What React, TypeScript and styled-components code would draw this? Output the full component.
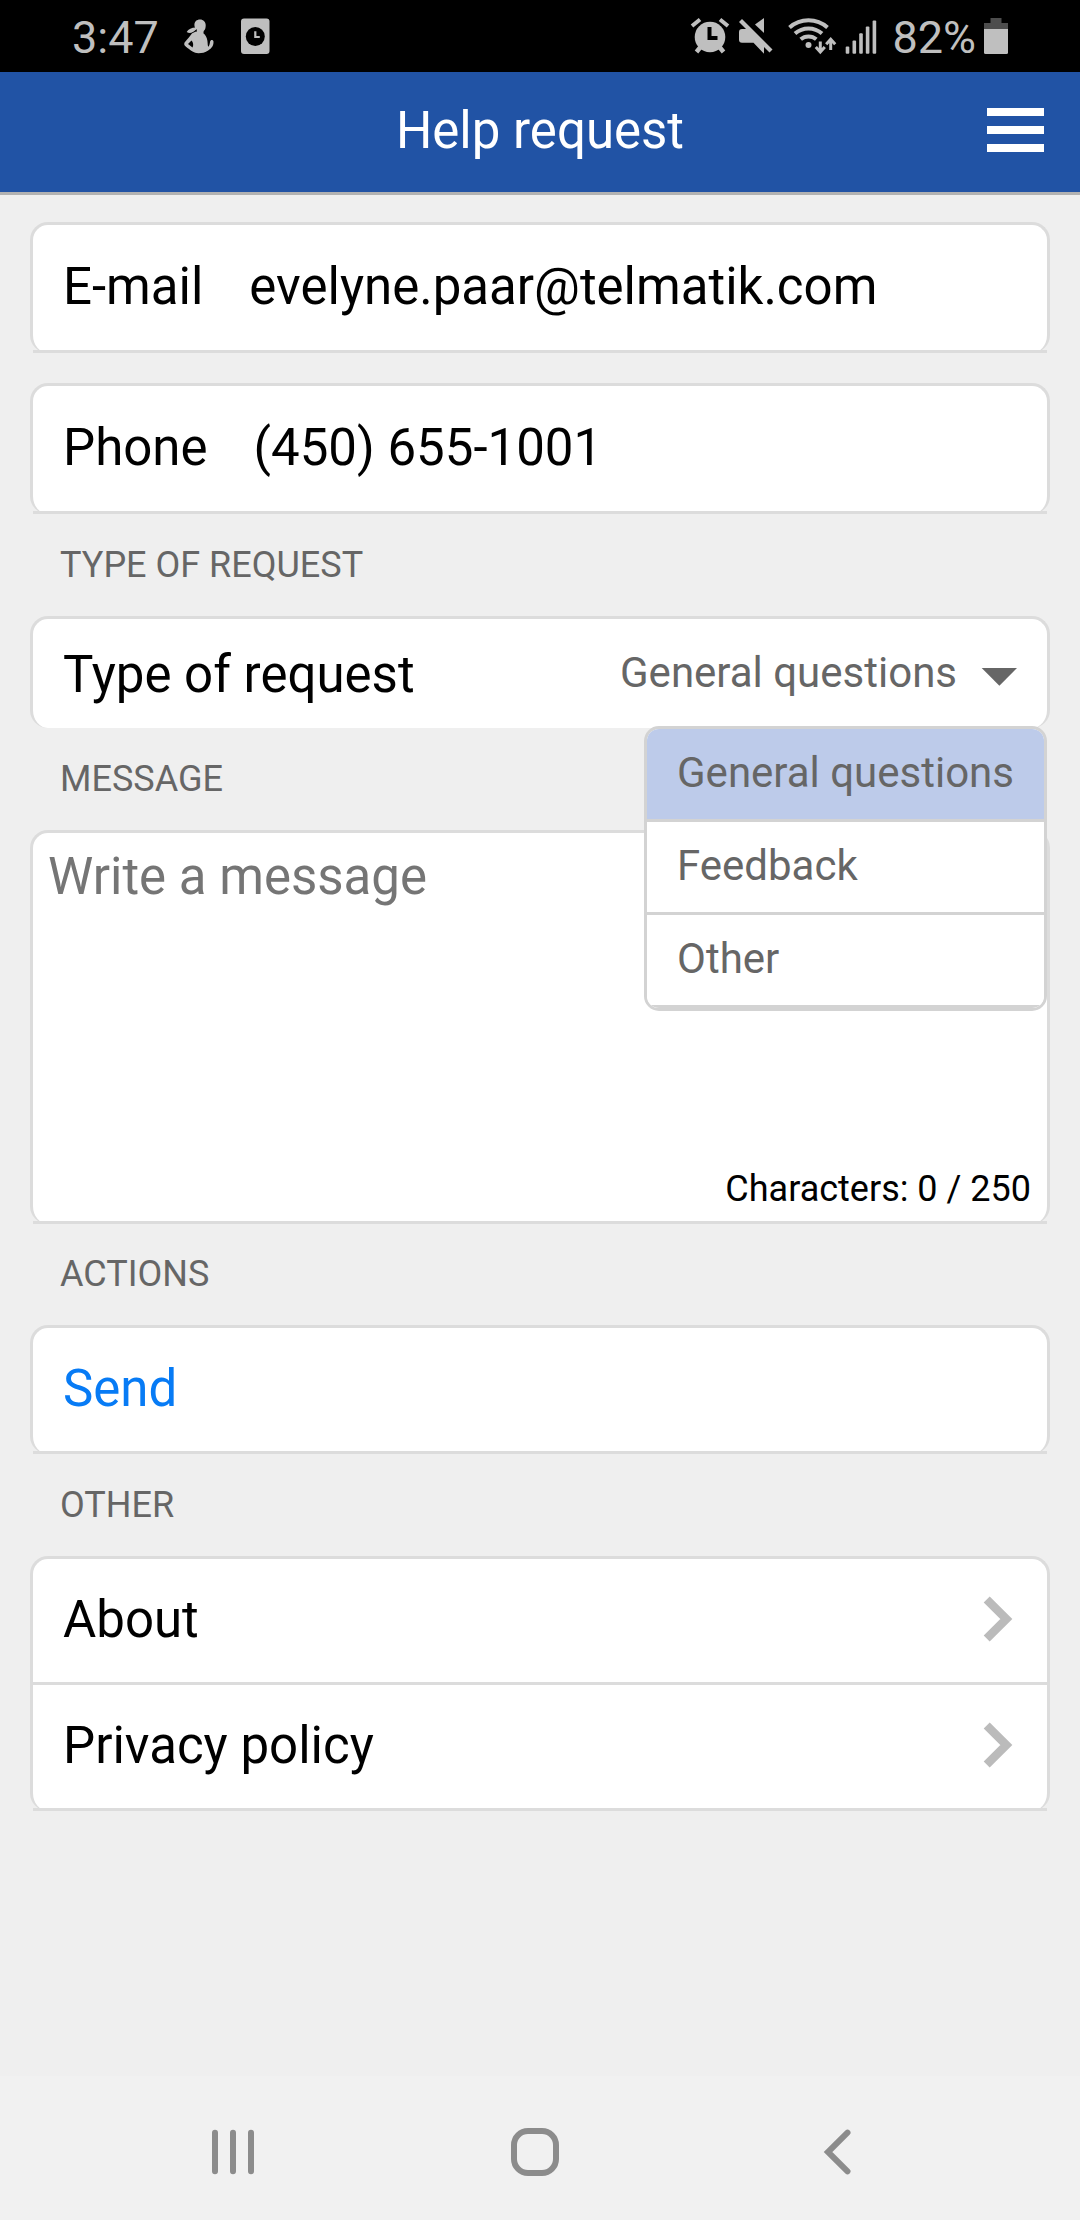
import React from "react";
import styled, { createGlobalStyle } from "styled-components";

const GlobalStyle = createGlobalStyle`
  *, *::before, *::after { box-sizing: border-box; }
  body { margin: 0; background: #efefef; }
`;

const Screen = styled.div`
  display: flex;
  flex-direction: column;
  width: 1080px;
  height: 2220px;
  background: #efefef;
  color: #000;
  font-family: Roboto, "Liberation Sans", sans-serif;
  overflow: hidden;
`;

const StatusBar = styled.div`
  display: flex;
  align-items: flex-start;
  justify-content: space-between;
  flex: none;
  height: 72px;
  padding: 0 72px 0 72px;
  background: #000;
  color: #bfbfbf;
`;

const StatusGroup = styled.div`
  display: flex;
  align-items: flex-start;
`;

const StatusText = styled.span<{ $gap: number }>`
  margin-right: ${(p) => p.$gap}px;
  font-size: 45px;
  line-height: 75px;
  white-space: nowrap;
`;

const StatusIcon = styled.svg<{ $gap?: number }>`
  display: block;
  flex: none;
  height: 72px;
  margin-right: ${(p) => p.$gap ?? 0}px;
`;

const Header = styled.header`
  display: grid;
  grid-template-columns: 120px 1fr 120px;
  align-items: center;
  flex: none;
  height: 123px;
  background: #2153a5;
  border-bottom: 3px solid #b2b2b2;
`;

const Title = styled.h1`
  grid-column: 2;
  margin: 0;
  color: #fff;
  font-size: 51px;
  font-weight: 400;
  line-height: 118px;
  height: 120px;
  text-align: center;
`;

const MenuButton = styled.button`
  display: flex;
  flex-direction: column;
  justify-content: center;
  gap: 10px;
  width: 84px;
  height: 120px;
  margin-left: 27px;
  padding: 0 0 4px;
  border: 0;
  background: none;
`;

const MenuBar = styled.span`
  display: block;
  width: 57px;
  height: 8px;
  background: #fff;
`;

const Content = styled.main`
  display: flex;
  flex-direction: column;
  flex: 1;
  min-height: 0;
  padding: 27px 30px 0;
`;

const Card = styled.section<{ $gapTop?: number }>`
  position: relative;
  flex: none;
  margin-top: ${(p) => p.$gapTop ?? 0}px;
  background: #fff;
  border: 3px solid #dcdcdc;
  border-bottom: 0;
  border-radius: 18px;
`;

const Row = styled.div<{ $height: number; $plain?: boolean }>`
  display: flex;
  align-items: flex-start;
  height: ${(p) => p.$height}px;
  padding: 0 29px 0 30px;
  border-bottom: ${(p) => (p.$plain ? "0" : "3px solid #dcdcdc")};
`;

const RowText = styled.span<{ $line: number; $color?: string }>`
  color: ${(p) => p.$color ?? "#000"};
  font-size: 51px;
  line-height: ${(p) => p.$line}px;
  white-space: nowrap;
`;

const RowValue = styled(RowText)`
  margin-left: 46px;
`;

const Spacer = styled.span`
  flex: 1;
`;

const RowIcon = styled.svg`
  display: block;
  flex: none;
`;

const SectionLabel = styled.h2<{ $height?: number }>`
  flex: none;
  height: ${(p) => p.$height ?? 102}px;
  margin: 0;
  padding-left: 30px;
  color: #666;
  font-size: 36px;
  font-weight: 400;
  line-height: ${(p) => (p.$height ?? 102) + (p.$height ? 0 : 1)}px;
`;

const SelectValue = styled.span`
  margin-right: 24px;
  color: #666;
  font-size: 42px;
  line-height: 107px;
  white-space: nowrap;
`;

const Menu = styled.ul`
  position: absolute;
  z-index: 2;
  top: 107px;
  right: 0;
  width: 403px;
  margin: 0;
  padding: 0;
  overflow: hidden;
  list-style: none;
  background: #fff;
  border: 3px solid #d3d3d3;
  border-radius: 15px;
`;

const MenuItem = styled.li<{ $selected?: boolean }>`
  height: 93px;
  padding-left: 30px;
  background: ${(p) => (p.$selected ? "#bdcbea" : "#fff")};
  border-bottom: 3px solid #d3d3d3;
  color: #666;
  font-size: 42px;
  line-height: 87px;
`;

const MessageBox = styled.div`
  display: flex;
  flex-direction: column;
  justify-content: space-between;
  height: 391px;
  padding: 14px 16px 9px 15px;
  border-bottom: 3px solid #dcdcdc;
`;

const Placeholder = styled.span`
  color: #757575;
  font-size: 51px;
  line-height: 60px;
`;

const Counter = styled.span`
  align-self: flex-end;
  font-size: 36px;
  line-height: 46px;
`;

const NavBar = styled.nav`
  display: grid;
  grid-template-columns: 300px 312px 28px;
  align-items: center;
  flex: none;
  height: 144px;
  padding: 8px 0 0 211px;
  background: #f1f1f1;
`;

function Chevron() {
  return (
    <RowIcon width="36" height="123" viewBox="982 1559 36 123">
      <path d="M986.700 1599.600L1006.300 1619L986.700 1638.400" fill="none" stroke="#bbb" strokeWidth="8.500" />
    </RowIcon>
  );
}

const requestTypes = ["General questions", "Feedback", "Other"];

export default function App() {
  return (
    <Screen>
      <GlobalStyle />
      <StatusBar>
        <StatusGroup>
          <StatusText $gap={24}>3:47</StatusText>
          <StatusIcon width="32" viewBox="183 0 32 72" fill="#bfbfbf" $gap={25}>
            <path d="M200 19.5c3.500 0 5.700 2.500 5.700 5.800c0 2.600-.5 4.600-2 5.700l-.3 2.300c1.800 1.500 3.500 4 4 7.500c.4 3 .2 4.700.9 6c1-.7 1.400-2.800 1.800-5.300c.4-2.300 3.300-2 3.400 0c.3 5-2.800 7.400-6.200 9.600c-2.500 1.700-5 2.200-8.800 2.200c-4.500 0-8.500-3.300-12.500-6.500c-2.200-1.800-2.400-3.300-.6-5.200c2-2.200 4-4.600 6.300-7.800c1-1.200 3-2 5.300-2.400l-.4-1.900c-1.500-1.100-2.200-2.700-2.200-4.500c0-3.300 2.200-5.500 5.600-5.500z" />
            <path d="M196.500 27.500c-4.500-.2-8 1.400-9.800 4.600c3.500 2 6.500.2 9.300-2.700z" />
            <path d="M191.500 40.500l-3.500 3.500l4.500 3.500c1.200-2.300.8-5-1-7z" fill="#000" />
          </StatusIcon>
          <StatusIcon width="30" viewBox="240 0 30 72">
            <rect x="241" y="18.500" width="28.500" height="35.500" rx="3" fill="#bfbfbf" />
            <circle cx="255.300" cy="36.500" r="9.500" fill="#000" />
            <path d="M255.300 31.300v5.700h4.500" fill="none" stroke="#bfbfbf" strokeWidth="2.200" />
          </StatusIcon>
        </StatusGroup>
        <StatusGroup>
          <StatusIcon width="40" viewBox="690 0 40 72" $gap={8}>
            <path d="M692 26l8-6.500M728 26l-8-6.500" stroke="#bfbfbf" strokeWidth="4" />
            <path d="M700.500 47l-4 5M719.500 47l4 5" stroke="#bfbfbf" strokeWidth="4.500" />
            <circle cx="710" cy="37" r="15.300" fill="#bfbfbf" />
            <path d="M709.500 27v11h8" fill="none" stroke="#000" strokeWidth="4" />
          </StatusIcon>
          <StatusIcon width="36" viewBox="738 0 36 72" fill="#bfbfbf" $gap={13}>
            <path d="M742 29h7l15 14v10.700l-10.500-11h-11.500q-3 0-3-3v-7.700q0-3 3-3z" />
            <path d="M764 18v15l-9-8.500z" />
            <path d="M740.500 20.500l30.500 30.500" stroke="#bfbfbf" strokeWidth="4.200" />
          </StatusIcon>
          <StatusIcon width="50" viewBox="787 0 50 72" $gap={8}>
            <g fill="none" stroke="#bfbfbf" strokeWidth="4">
              <path d="M789.500 27.500a28.500 28.500 0 0 1 38 0" />
              <path d="M795 33.500a20.500 20.500 0 0 1 27 0" />
              <path d="M800.700 39.300a12 12 0 0 1 15.600 0" />
            </g>
            <circle cx="808.500" cy="45" r="3" fill="#bfbfbf" />
            <path d="M820.300 41.500v10M815.800 47l4.500 5l4.500-5M830.700 50v-10M826.200 44.200l4.500-5l4.500 5" fill="none" stroke="#bfbfbf" strokeWidth="3" />
          </StatusIcon>
          <StatusIcon width="32" viewBox="845 0 32 72" fill="#bfbfbf" $gap={15}>
            <rect x="845.700" y="46.500" width="3.600" height="7.300" rx="1" />
            <rect x="852.500" y="40.500" width="3.600" height="13.300" rx="1" />
            <rect x="859.200" y="33.200" width="3.600" height="20.600" rx="1" />
            <rect x="865.800" y="26.500" width="3.600" height="27.300" rx="1" />
            <rect x="872.600" y="20.500" width="3.600" height="33.300" rx="1" />
          </StatusIcon>
          <StatusText $gap={8}>82%</StatusText>
          <StatusIcon width="24" viewBox="984 0 24 72">
            <path d="M990.500 18h11v5h6.500v6h-24v-6h6.500z" fill="#4d4d4d" />
            <path d="M984 29h24v23.500q0 1.500-1.500 1.500h-21q-1.500 0-1.500-1.500z" fill="#bfbfbf" />
          </StatusIcon>
        </StatusGroup>
      </StatusBar>

      <Header>
        <Title>Help request</Title>
        <MenuButton aria-label="Menu">
          <MenuBar />
          <MenuBar />
          <MenuBar />
        </MenuButton>
      </Header>

      <Content>
        <Card>
          <Row $height={128}>
            <RowText $line={123}>E-mail</RowText>
            <RowValue $line={123}>evelyne.paar@telmatik.com</RowValue>
          </Row>
        </Card>
        <Card $gapTop={30}>
          <Row $height={128}>
            <RowText $line={123}>Phone</RowText>
            <RowValue $line={123}>(450) 655-1001</RowValue>
          </Row>
        </Card>

        <SectionLabel>TYPE OF REQUEST</SectionLabel>
        <Card>
          <Row $height={109} $plain>
            <RowText $line={111}>Type of request</RowText>
            <Spacer />
            <SelectValue>General questions</SelectValue>
            <RowIcon width="37" height="109" viewBox="981 619 37 109">
              <path d="M981.700 668h35.300l-17.600 17.800z" fill="#666" />
            </RowIcon>
          </Row>
          <Menu>
            {requestTypes.map((type, i) => (
              <MenuItem key={type} $selected={i === 0}>
                {type}
              </MenuItem>
            ))}
          </Menu>
        </Card>

        <SectionLabel>MESSAGE</SectionLabel>
        <Card>
          <MessageBox>
            <Placeholder>Write a message</Placeholder>
            <Counter>Characters: 0 / 250</Counter>
          </MessageBox>
        </Card>

        <SectionLabel $height={101}>ACTIONS</SectionLabel>
        <Card>
          <Row $height={126}>
            <RowText $line={121} $color="#077bf5">Send</RowText>
          </Row>
        </Card>

        <SectionLabel>OTHER</SectionLabel>
        <Card>
          <Row $height={126}>
            <RowText $line={121}>About</RowText>
            <Spacer />
            <Chevron />
          </Row>
          <Row $height={126}>
            <RowText $line={121}>Privacy policy</RowText>
            <Spacer />
            <Chevron />
          </Row>
        </Card>
      </Content>

      <NavBar>
        <svg width="44" height="48" viewBox="211 2128 44 48" stroke="#8c8c8c" strokeWidth="6" strokeLinecap="round">
          <path d="M215 2132.700v38.600M233 2132.700v38.600M251 2132.700v38.600" />
        </svg>
        <svg width="48" height="48" viewBox="0 0 48 48">
          <rect x="3" y="3" width="42" height="42" rx="14" fill="none" stroke="#8c8c8c" strokeWidth="6" />
        </svg>
        <svg width="28" height="48" viewBox="823 2128 28 48" fill="none" stroke="#8c8c8c" strokeWidth="6" strokeLinecap="round">
          <path d="M847.500 2132.700L828 2152L847.500 2171.300" />
        </svg>
      </NavBar>
    </Screen>
  );
}
